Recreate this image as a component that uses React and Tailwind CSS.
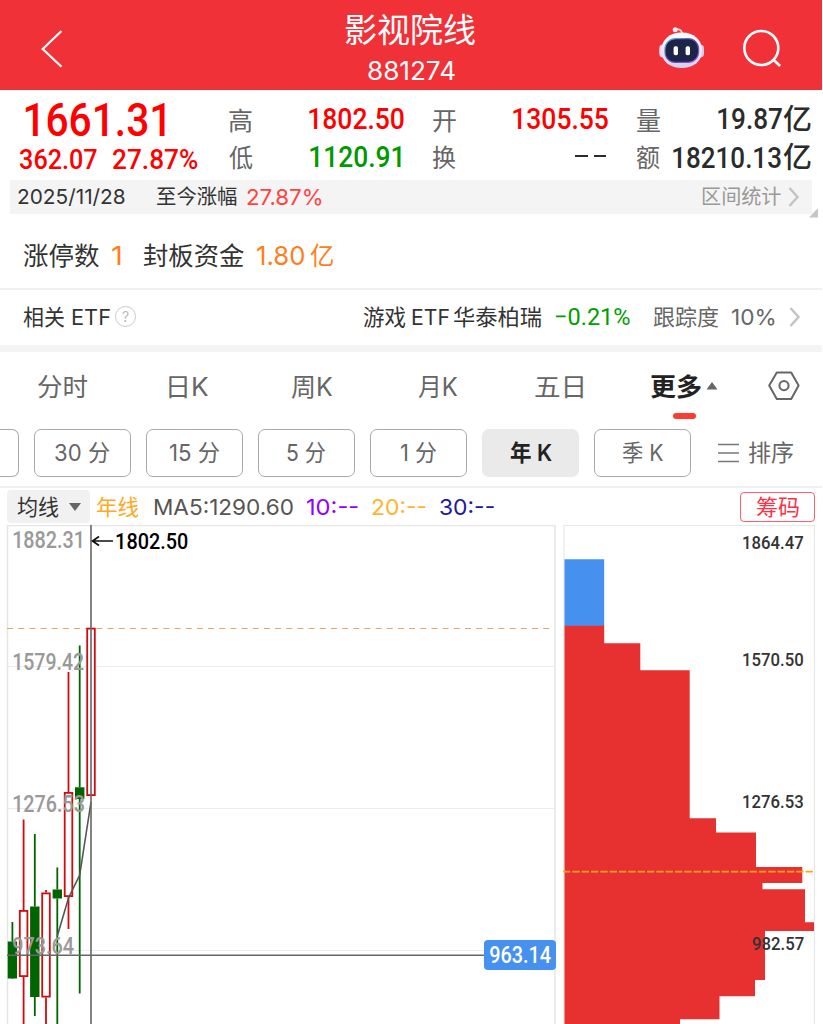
import React, { useLayoutEffect, useRef, useState } from 'react'
import clsx from 'clsx'

const SANS = "font-['Inter','Noto_Sans_CJK_SC',sans-serif]"
const NUM = "font-['Roboto','Noto_Sans_CJK_SC',sans-serif] font-medium"

const PERIODS = [
  { label: '30 分', w: 55 },
  { label: '15 分', w: 50 },
  { label: '5 分', w: 39 },
  { label: '1 分', w: 36 },
  { label: '年 K', w: 42, active: true },
  { label: '季 K', w: 41 },
]

const TABS = [
  { label: '分时', w: 50, gap: 'ml-[37.500px]' },
  { label: '日K', w: 40, gap: 'ml-[81px]' },
  { label: '周K', w: 42, gap: 'ml-[82px]' },
  { label: '月K', w: 40, gap: 'ml-[85px]' },
  { label: '五日', w: 48, gap: 'ml-[77.500px]' },
]

// x: centre, top/bottom: body, high/low: wick
const CANDLES = [
  { x: 12.4, top: 941.5, bottom: 978.5, high: 922, low: 978 },
  { x: 23.6, top: 910, bottom: 977, high: 819.5, low: 1030, up: true },
  { x: 34.8, top: 906.5, bottom: 997, high: 834, low: 1016 },
  { x: 46, top: 892.5, bottom: 997.5, high: 890, low: 1030, up: true },
  { x: 57.3, top: 889.5, bottom: 898.5, high: 867.5, low: 1030 },
  { x: 68.5, top: 792, bottom: 897, high: 672, low: 929, up: true },
  { x: 79.7, top: 787.3, bottom: 799, high: 645.5, low: 993.5 },
  { x: 91, top: 627.7, bottom: 796, high: 627.7, low: 796, up: true },
]

const PRICE_LABELS = [
  { text: '1882.31', w: 68.5, pos: 'top-[4px]' },
  { text: '1579.42', w: 71, pos: 'top-[126px]' },
  { text: '1276.53', w: 71, pos: 'top-[268px]' },
  { text: '973.64', w: 61, pos: 'top-[410px]' },
]

const CHIP_LABELS = [
  { text: '1864.47', w: 60, pos: 'top-[8px]' },
  { text: '1570.50', w: 60, pos: 'top-[125px]' },
  { text: '1276.53', w: 60, pos: 'top-[267px]' },
  { text: '982.57', w: 51.5, pos: 'top-[409px]' },
]

// Text squeezed or stretched to an exact visible width
function Fit({ w, className, children }) {
  const ref = useRef(null)
  const [transform, setTransform] = useState('none')

  useLayoutEffect(() => {
    const style = getComputedStyle(ref.current)
    const ctx = document.createElement('canvas').getContext('2d')
    ctx.font = `${style.fontWeight} ${style.fontSize} ${style.fontFamily}`
    const m = ctx.measureText(children)
    const ink = m.actualBoundingBoxLeft + m.actualBoundingBoxRight
    setTransform(`scaleX(${w / ink}) translateX(${m.actualBoundingBoxLeft}px)`)
  }, [w, children])

  return (
    <span className={clsx('inline-block shrink-0 whitespace-nowrap leading-none', className)} style={{ width: w }}>
      <span ref={ref} className="inline-block origin-left" style={{ transform }}>{children}</span>
    </span>
  )
}

function Robot() {
  return (
    <svg className="w-[48px] h-[46px]" viewBox="658 25 48 46" fill="none">
      <defs>
        <linearGradient id="shell" x1="0" y1="0" x2="0" y2="1">
          <stop offset="0" stopColor="#ffffff" />
          <stop offset="0.6" stopColor="#e9e4f8" />
          <stop offset="1" stopColor="#d2d0ec" />
        </linearGradient>
        <linearGradient id="rim" x1="0" y1="0" x2="1" y2="1">
          <stop offset="0" stopColor="#6fb8e8" />
          <stop offset="0.5" stopColor="#5a3fb0" />
          <stop offset="1" stopColor="#a45cf0" />
        </linearGradient>
      </defs>
      <path d="M675.5 29.5c3-1 6 .3 6.800 4" stroke="#f4dfe8" strokeWidth="1.700" />
      <circle cx="675.200" cy="29.700" r="2.500" fill="#f7e9f0" />
      <rect x="659.300" y="44.500" width="8" height="13" rx="4" fill="#dfdcf2" />
      <rect x="696" y="44.500" width="8" height="13" rx="4" fill="#cfcdec" />
      <path d="M681.700 32.500c12 0 20.300 7 20.300 18s-8.300 17.500-20.300 17.500-20.300-6.500-20.300-17.500 8.300-18 20.300-18z" fill="url(#shell)" />
      <rect x="665" y="38.600" width="33.600" height="23.800" rx="10.500" fill="#1c2447" stroke="url(#rim)" strokeWidth="1.200" />
      <rect x="673.600" y="46.300" width="4.400" height="9" rx="1.800" fill="#fff" />
      <rect x="685.600" y="46.300" width="4.400" height="9" rx="1.800" fill="#fff" />
    </svg>
  )
}

function Chevron({ className }) {
  return (
    <svg className={clsx('w-[12px] h-[22px] shrink-0', className)} viewBox="0 0 12 22" fill="none" stroke="#c4c4c4" strokeWidth="2.500">
      <path d="M1.500 2l8 9-8 9" />
    </svg>
  )
}

function Header() {
  return (
    <header className="h-[90px] bg-[#f03137] text-white flex">
      <svg className="w-[24px] h-[40px] mt-[29px] ml-[40px]" viewBox="40 29 24 40" fill="none" stroke="#fff" strokeWidth="2.200">
        <path d="M61.500 31L42.700 49l18.800 17.800" />
      </svg>
      <div className="w-[132px] ml-[280px] flex flex-col items-center">
        <Fit w={130} className="text-[33px] mt-[14px]">影视院线</Fit>
        <Fit w={86.5} className="text-[25.5px] mt-[11px] translate-x-px">881274</Fit>
      </div>
      <div className="ml-[182px] mt-[25px]"><Robot /></div>
      <svg className="w-[42px] h-[42px] mt-[27px] ml-[35px]" viewBox="741 27 42 42" fill="none" stroke="#fff" strokeWidth="2.600">
        <circle cx="761.300" cy="48" r="17" />
        <path d="M773.500 59.800l6.600 6.200" />
      </svg>
    </header>
  )
}

function Quote() {
  return (
    <section className={clsx('h-[90px] pt-[10px]', NUM)}>
      <div className="h-[40px] flex items-center">
        <Fit w={140} className="ml-[25px] text-[46.5px] !leading-[0.8] text-[#ff0000] pt-0.5">1661.31</Fit>
        <Fit w={23} className={clsx('ml-[64px] text-[25px] text-[#666] !font-normal pt-0.5', SANS)}>高</Fit>
        <Fit w={95} className="ml-[57px] text-[30px] text-[#ff0000] -mt-0.5">1802.50</Fit>
        <Fit w={23} className={clsx('ml-[29px] text-[25px] text-[#666] !font-normal pt-0.5', SANS)}>开</Fit>
        <Fit w={95} className="ml-[57px] text-[30px] text-[#ff0000] -mt-0.5">1305.55</Fit>
        <Fit w={23} className={clsx('ml-[29px] text-[25px] text-[#666] !font-normal pt-0.5', SANS)}>量</Fit>
        <Fit w={64} className="ml-[58px] text-[30px] text-[#2b2b2b] -mt-0.5">19.87</Fit>
        <Fit w={28} className="ml-[1px] text-[29px] text-[#2b2b2b]">亿</Fit>
      </div>
      <div className="h-[36px] flex items-center">
        <Fit w={77} className="ml-[20px] text-[27.5px] text-[#ff0000] pt-1">362.07</Fit>
        <Fit w={85} className="ml-[16px] text-[27.5px] text-[#ff0000] pt-1">27.87%</Fit>
        <Fit w={24} className={clsx('ml-[31px] text-[25px] text-[#666] !font-normal', SANS)}>低</Fit>
        <Fit w={91} className="ml-[57px] text-[30px] text-[#009900] -mt-0.5">1120.91</Fit>
        <Fit w={24} className={clsx('ml-[31px] text-[25px] text-[#666] !font-normal', SANS)}>换</Fit>
        <span className="ml-[119px] mr-[30px] flex gap-[6px] -mt-1">
          <i className="w-[12.5px] h-[2.500px] bg-[#2b2b2b]" />
          <i className="w-[12.5px] h-[2.500px] bg-[#2b2b2b]" />
        </span>
        <Fit w={24} className={clsx('text-[25px] text-[#666] !font-normal', SANS)}>额</Fit>
        <Fit w={108} className="ml-[13px] text-[30px] text-[#2b2b2b]">18210.13</Fit>
        <Fit w={28} className="ml-[2px] text-[29px] text-[#2b2b2b]">亿</Fit>
      </div>
    </section>
  )
}

function RangeBar() {
  return (
    <div className="relative h-[34px] mx-[10px] bg-[#f4f4f4] flex items-center text-[20.500px] text-[#333]">
      <Fit w={107} className="ml-[8px]">2025/11/28</Fit>
      <Fit w={80} className="ml-[32px] pt-px">至今涨幅</Fit>
      <Fit w={75} className="ml-[10px] text-[22px] text-[#ff4340]">27.87%</Fit>
      <Fit w={79} className="ml-[380px] text-[#999] pt-px">区间统计</Fit>
      <Chevron className="ml-[7px]" />
      <svg className="absolute left-[799px] top-[28px] w-[10px] h-[10px]" viewBox="0 0 10 10">
        <path d="M9 0v9.500H0z" fill="#c6c6c6" />
      </svg>
    </div>
  )
}

function LimitRow() {
  return (
    <div className="h-[74px] pt-[10px] flex items-center text-[25.500px] text-[#333]">
      <Fit w={76} className="ml-[23px]">涨停数</Fit>
      <Fit w={9} className="ml-[13px] text-[#ff7e1c] text-[26px]">1</Fit>
      <Fit w={101} className="ml-[22px]">封板资金</Fit>
      <Fit w={47} className="ml-[12.500px] text-[#ff7e1c] text-[26px]">1.80</Fit>
      <Fit w={23} className="ml-[6px] text-[#ff7e1c]">亿</Fit>
    </div>
  )
}

function EtfRow() {
  return (
    <div className="h-[57px] pb-[2px] border-t-2 border-[#f0f0f0] flex items-center text-[22px] text-[#333]">
      <Fit w={42} className="ml-[23px]">相关</Fit>
      <Fit w={38} className="ml-[7px]">ETF</Fit>
      <span className="ml-[5px] w-[21px] h-[21px] rounded-full border-[1.500px] border-[#c8c8c8] flex items-center justify-center text-[14px] text-[#bbb] leading-none">?</span>
      <Fit w={43} className="ml-[227px]">游戏</Fit>
      <Fit w={37} className="ml-[6px]">ETF</Fit>
      <Fit w={88} className="ml-[5px]">华泰柏瑞</Fit>
      <Fit w={75} className={clsx('ml-[13px] text-[24px] text-[#009e00] !font-normal', NUM)}>−0.21%</Fit>
      <Fit w={66} className="ml-[23px] text-[#666]">跟踪度</Fit>
      <Fit w={43} className="ml-[13px] text-[#666]">10%</Fit>
      <Chevron className="ml-[14px]" />
    </div>
  )
}

function Tabs() {
  return (
    <nav className="h-[84px] border-t-[7px] border-[#f4f4f4] flex items-start text-[25px] text-[#666]">
      {TABS.map((t) => (
        <Fit key={t.label} w={t.w} className={clsx('mt-[23px]', t.gap)}>{t.label}</Fit>
      ))}
      <div className="relative ml-[67px] mt-[23px] flex text-[#222]">
        <Fit w={51} className="font-bold">更多</Fit>
        <svg className="ml-[5px] mt-[7px] w-[12px] h-[8px]" viewBox="0 0 12 8"><path d="M6 0l5.500 7.500H.5z" fill="#666" /></svg>
        <span className="absolute left-[23px] top-[38px] w-[23px] h-[6px] rounded-full bg-[#ff3a30]" />
      </div>
      <svg className="ml-[49px] mt-[19px] w-[34px] h-[30px]" viewBox="0 0 34 30" fill="none" stroke="#666" strokeWidth="2">
        <path d="M9.800 1.500h14.400L31.600 14.600l-7.400 13.300H9.800L2.200 14.600z" strokeLinejoin="round" />
        <circle cx="17" cy="14.600" r="4.600" />
      </svg>
    </nav>
  )
}

function Periods() {
  return (
    <div className="h-[57px] flex items-start text-[23px] text-[#666]">
      <div className="w-[19px] h-[48px] rounded-r-[7px] border border-l-0 border-[#aaa]" />
      {PERIODS.map((p) => (
        <div
          key={p.label}
          className={clsx(
            'w-[97px] h-[48px] ml-[15px] shrink-0 rounded-[7px] flex items-center justify-center',
            p.active ? 'bg-[#eaeaea] text-[#222] font-semibold' : 'border border-[#aaa]'
          )}
        >
          <Fit w={p.w} className="pt-px">{p.label}</Fit>
        </div>
      ))}
      <div className="ml-[27px] h-[48px] flex items-center">
        <svg className="w-[21px] h-[20px]" viewBox="0 0 21 20" stroke="#777" strokeWidth="1.700">
          <path d="M0 1.500h21M0 10h21M0 18.500h21" />
        </svg>
        <Fit w={45} className="ml-[9px] pt-px">排序</Fit>
      </div>
    </div>
  )
}

function IndicatorRow() {
  return (
    <div className="h-[39px] border-t-2 border-[#f0f0f0] flex items-center pl-[7px] text-[22px]">
      <div className="w-[83px] h-[33px] bg-[#f1f1f1] rounded-[4px] flex items-center text-[#333]">
        <Fit w={42} className="ml-[10px]">均线</Fit>
        <svg className="ml-[10px] w-[12px] h-[8px]" viewBox="0 0 12 8"><path d="M0 0h12L6 8z" fill="#666" /></svg>
      </div>
      <Fit w={42} className="ml-[7px] text-[#ffa91e]">年线</Fit>
      <Fit w={139} className="ml-[15px] text-[#555]">MA5:1290.60</Fit>
      <Fit w={51} className="ml-[14px] text-[#9400ff]">10:--</Fit>
      <Fit w={54} className="ml-[14px] text-[#ffb52e]">20:--</Fit>
      <Fit w={54} className="ml-[14px] text-[#1f1a9c]">30:--</Fit>
      <div className="ml-[246px] w-[75px] h-[30px] rounded-[4px] border-[1.500px] border-[#ff5c6c] text-[#ff2f45] flex items-center justify-center">
        <Fit w={43}>筹码</Fit>
      </div>
    </div>
  )
}

function KLineChart() {
  return (
    <div className="relative w-[557px] h-[499px] shrink-0 overflow-hidden">
      <svg className="block w-[557px] h-[499px]" viewBox="0 525 557 499" fill="none">
        <path d="M7.500 1030V525.500H555V1030" stroke="#e6e6e6" strokeWidth="1.600" />
        <path d="M7 666.500h548M7 808.500h548M7 950.500h548" stroke="#ececec" />
        <path d="M7 628.500h544" stroke="#e0a868" strokeWidth="1.200" strokeDasharray="6 5.170" />
        {CANDLES.map((c) => {
          const color = c.up ? '#d20a10' : '#006400'
          return (
            <g key={c.x} stroke={color} strokeWidth="1.800">
              <path d={`M${c.x} ${c.high}V${c.top}M${c.x} ${c.bottom}V${c.low}`} />
              <rect x={c.x - 3.8} y={c.top + 0.9} width="7.600" height={c.bottom - c.top - 1.8} fill={c.up ? '#fff' : color} />
            </g>
          )
        })}
        <path d="M57.300 936L68.500 898 79.700 875 91 802" stroke="#555" strokeWidth="1.600" />
        <path d="M7 955.300h548M91 525v505" stroke="#666" strokeWidth="1.600" />
        <path d="M113 541H93M99 536.500L92.500 541l6.500 4.500" stroke="#111" strokeWidth="1.700" />
      </svg>
      {PRICE_LABELS.map((l) => (
        <Fit key={l.text} w={l.w} className={clsx('absolute left-[12.500px] text-[23px] text-[#999]', NUM, l.pos)}>{l.text}</Fit>
      ))}
      <Fit w={71.5} className={clsx('absolute left-[115.500px] top-[5px] text-[22.500px] text-black', NUM)}>1802.50</Fit>
      <div className="absolute left-[484px] top-[415px] w-[72px] h-[30px] rounded-[4px] bg-[#4690ef] text-white flex items-center justify-center">
        <Fit w={61} className={clsx('text-[23px]', NUM)}>963.14</Fit>
      </div>
    </div>
  )
}

function ChipChart() {
  return (
    <div className="relative ml-[6px] w-[252px] h-[499px] shrink-0 overflow-hidden">
      <svg className="block w-[252px] h-[499px]" viewBox="563 525 252 499" fill="none">
        <path d="M564 1030V525.500H814.500V1030" stroke="#e8e8e8" strokeWidth="1.200" />
        <path d="M564.500 559.200H604.200V626H564.500z" fill="#4690ef" />
        <path
          d="M564.500 625.800H604.200V643.300H640.300V670.200H689.700V818.300H716V832.500H756V867H802.300V883H762.500V889.200H805V922.200H814V931H765V980H755V996.300H719.500V1019.300H680V1030H564.500z"
          fill="#e73030"
        />
        <path d="M563 871.700h251" stroke="#ffa01c" strokeWidth="1.700" strokeDasharray="7.300 2.030" />
      </svg>
      {CHIP_LABELS.map((l) => (
        <Fit key={l.text} w={l.w} className={clsx('absolute right-[12px] text-[19px] text-[#333]', NUM, l.pos)}>{l.text}</Fit>
      ))}
    </div>
  )
}

export default function App() {
  return (
    <div className={clsx('w-[823px] h-[1024px] bg-white overflow-hidden', SANS)}>
      <div className="w-[822px]">
        <Header />
        <Quote />
        <RangeBar />
        <LimitRow />
        <EtfRow />
        <Tabs />
        <Periods />
        <IndicatorRow />
        <div className="flex">
          <KLineChart />
          <ChipChart />
        </div>
      </div>
    </div>
  )
}
